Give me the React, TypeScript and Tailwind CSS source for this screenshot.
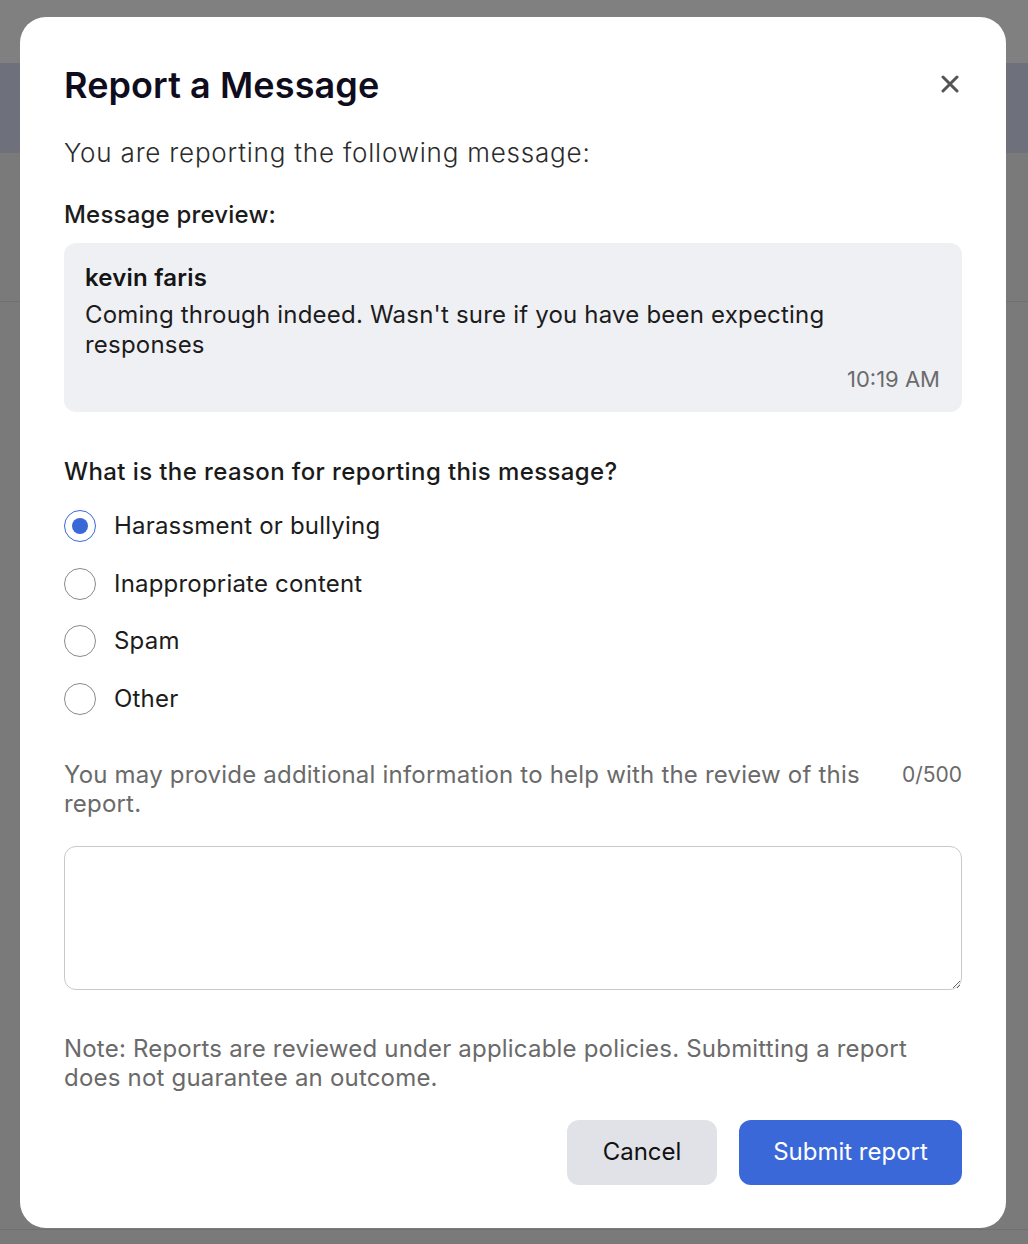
import React, { useState } from 'react';

const reasons = ['Harassment or bullying', 'Inappropriate content', 'Spam', 'Other'];

function Radio({ checked }: { checked: boolean }) {
    return (
        <span
            className={
                checked
                    ? 'w-[32px] h-[32px] rounded-full border border-[#3b68d9] flex items-center justify-center shrink-0'
                    : 'w-[32px] h-[32px] rounded-full border border-[#8a8a8a] flex items-center justify-center shrink-0'
            }
        >
            {checked && <span className='w-[16px] h-[16px] rounded-full bg-[#3b68d9]' />}
        </span>
    );
}

function ReportModal() {
    const [reason, setReason] = useState('Harassment or bullying');
    const [info, setInfo] = useState('');

    return (
        <div className='absolute left-[20px] top-[17px] w-[986px] bg-white rounded-[26px] px-[44px] pt-[46px] pb-[43px] font-["Inter","Noto_Sans",sans-serif]'>
            <div className='flex items-center justify-between'>
                <h2 className='text-[36px] leading-[44px] font-semibold tracking-[0.1px] text-[#0f0d1d]'>Report a Message</h2>
                <button className='w-[30px] h-[30px] flex items-center justify-center mr-[-3px] mt-[-2px]'>
                    <svg width='18' height='18' viewBox='0 0 18 18'>
                        <path d='M2 2 L16 16 M16 2 L2 16' stroke='#555' strokeWidth='3' strokeLinecap='round' />
                    </svg>
                </button>
            </div>

            <p className='mt-[30px] text-[26px] leading-[32px] font-light tracking-[0.8px] text-[#2b2b2b]'>You are reporting the following message:</p>
            <p className='mt-[31px] text-[24px] leading-[30px] font-medium tracking-[0.2px] text-[#1c1c1c]'>Message preview:</p>

            <div className='mt-[13px] bg-[#eff0f4] rounded-[12px] pl-[21px] pr-[22px] pt-[20px] pb-[19px]'>
                <div className='text-[24px] leading-[30px] font-semibold tracking-[0.2px] text-[#151515]'>kevin faris</div>
                <div className='mt-[7px] text-[24px] leading-[30px] tracking-[0.2px] text-[#1c1c1c] pr-[110px]'>
                    Coming through indeed. Wasn't sure if you have been expecting responses
                </div>
                <div className='mt-[5px] text-right text-[22px] leading-[28px] text-[#6b6b6b]'>10:19 AM</div>
            </div>

            <p className='mt-[45px] text-[24px] leading-[30px] font-medium tracking-[0.4px] text-[#1a1a1a]'>What is the reason for reporting this message?</p>

            <div className='mt-[23px] flex flex-col gap-[25.5px]'>
                {reasons.map((r) => (
                    <label key={r} className='flex items-center gap-[18px] cursor-pointer' onClick={() => setReason(r)}>
                        <Radio checked={reason === r} />
                        <span className='text-[24px] leading-[32px] tracking-[0.2px] text-[#1c1c1c]'>{r}</span>
                    </label>
                ))}
            </div>

            <div className='mt-[45px] flex items-start justify-between gap-[40px]'>
                <p className='flex-1 text-[24px] leading-[29px] tracking-[0.2px] text-[#6a6a6a]'>
                    You may provide additional information to help with the review of this report.
                </p>
                <span className='text-[21px] leading-[29px] text-[#6a6a6a]'>{info.length}/500</span>
            </div>

            <textarea
                value={info}
                onChange={(e) => setInfo(e.target.value)}
                maxLength={500}
                className='mt-[28px] block w-full h-[144px] rounded-[12px] border border-[#c9c9c9] p-3 text-[22px] outline-none'
            />

            <p className='mt-[44px] text-[24px] leading-[29px] tracking-[0.2px] text-[#6a6a6a] pr-[40px]'>
                Note: Reports are reviewed under applicable policies. Submitting a report does not guarantee an outcome.
            </p>

            <div className='mt-[28px] flex justify-end gap-[22px]'>
                <button className='w-[150px] h-[65px] rounded-[12px] bg-[#e1e2e8] text-[24px] text-[#111]'>Cancel</button>
                <button className='w-[223px] h-[65px] rounded-[12px] bg-[#3b68d9] text-[24px] text-white'>Submit report</button>
            </div>
        </div>
    );
}

export default function App() {
    return (
        <div className='relative w-full h-[1244px] overflow-hidden bg-[#7a7a7a]'>
            <div className='h-[63px] bg-[#808080]' />
            <div className='h-[90px] bg-[#6e717b]' />
            <div className='h-[149px] border-b border-[#707070]' />
            <div className='h-[928px] border-b border-[#707070]' />
            <ReportModal />
        </div>
    );
}
